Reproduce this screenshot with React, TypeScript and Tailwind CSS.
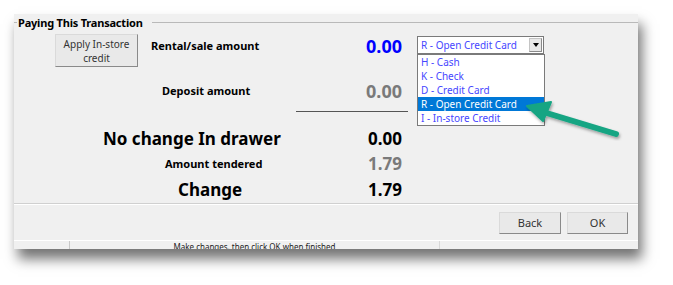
import React from "react";

const items = [
  { code: "H", label: "Cash" },
  { code: "K", label: "Check" },
  { code: "D", label: "Credit Card" },
  { code: "R", label: "Open Credit Card" },
  { code: "I", label: "In-store Credit" },
];

function WinButton({ children, className = "" }: { children: React.ReactNode; className?: string }) {
  return (
    <button
      className={`flex items-center justify-center bg-[#e9e9e9] border border-[#dadada] border-r-[#8a8a8a] border-b-[#8a8a8a] text-[#333] leading-[14px] ${className}`}
    >
      {children}
    </button>
  );
}

export default function App() {
  const selected = "R";

  return (
    <div className="relative w-[673px] h-[285px] bg-white overflow-hidden font-['Noto_Sans',sans-serif]">
      <div className="ml-[14px] pt-[14px]">
        <div className="relative w-[624px] h-[235px] bg-[#f0f0f0] flex flex-col shadow-[4px_10px_12px_rgba(0,0,0,0.55)]">
          {/* group header */}
          <div className="flex items-center h-[18px]">
            <div className="w-[3px] h-px bg-[#b9b9b9] mt-[-2px]" />
            <span className="ml-[1px] text-[11px] font-bold text-black tracking-[-0.2px]">Paying This Transaction</span>
            <div className="flex-1 h-px bg-[#b9b9b9] ml-[9px] mt-[-2px]" />
          </div>

          {/* row 1 */}
          <div className="flex items-start h-[33px] mt-[2px]">
            <WinButton className="ml-[41px] w-[83px] h-[33px] flex-col text-[10px] leading-[13px]">
              <span>Apply In-store</span>
              <span>credit</span>
            </WinButton>
            <div className="ml-[13px] h-[24px] leading-[24px] text-[11px] font-bold text-black">Rental/sale amount</div>
            <div className="ml-auto mr-[236px] h-[24px] leading-[24px] text-[18px] font-bold text-[#0000ff]">0.00</div>
          </div>

          {/* row 2 */}
          <div className="flex items-center h-[24px] mt-[12px]">
            <div className="ml-[148px] text-[11px] font-bold text-black">Deposit amount</div>
            <div className="ml-auto mr-[236px] text-[18px] font-bold text-[#7a7a7a]">0.00</div>
          </div>

          <div className="flex">
            <div className="ml-[282px] mt-[8px] w-[112px] h-px bg-[#555]" />
          </div>

          {/* row 3 */}
          <div className="flex items-center h-[24px] mt-[15px]">
            <div className="ml-[89px] text-[17px] font-bold text-black">No change In drawer</div>
            <div className="ml-auto mr-[236px] text-[17px] font-bold text-black">0.00</div>
          </div>

          {/* row 4 */}
          <div className="flex items-center h-[20px] mt-[3px]">
            <div className="ml-[151px] text-[11px] font-bold text-black">Amount tendered</div>
            <div className="ml-auto mr-[236px] text-[17px] font-bold text-[#7a7a7a]">1.79</div>
          </div>

          {/* row 5 */}
          <div className="flex items-center h-[24px] mt-[4px]">
            <div className="ml-[164px] text-[17px] font-bold text-black">Change</div>
            <div className="ml-auto mr-[236px] text-[17px] font-bold text-black">1.79</div>
          </div>

          <div className="mt-[1px] h-[2px] bg-[#d0d0d0] border-b border-white" />

          {/* buttons */}
          <div className="flex justify-end gap-[6px] pr-[10px] mt-[7px]">
            <WinButton className="w-[62px] h-[22px] text-[11px]">Back</WinButton>
            <WinButton className="w-[61px] h-[22px] text-[11px]">OK</WinButton>
          </div>

          {/* status bar */}
          <div className="mt-auto h-[9px] flex border-t border-white overflow-hidden">
            <div className="w-[56px] border-r border-[#c8c8c8]" />
            <div className="w-[370px] border-r border-[#d8d8d8] flex justify-center">
              <span className="text-[8px] leading-[10px] text-[#222] mt-[1px]">Make changes, then click OK when finished</span>
            </div>
            <div className="flex-1" />
          </div>

          {/* combo box */}
          <div className="absolute left-[403px] top-[22px] w-[127px] h-[18px] bg-white border border-[#7a7a7a] flex items-center">
            <span className="pl-[3px] text-[10px] text-[#4646ff]">R - Open Credit Card</span>
            <div className="ml-auto mr-[1px] w-[13px] h-[14px] bg-[#e8e8e8] border border-[#c4c4c4] border-r-[#8a8a8a] border-b-[#8a8a8a] flex items-center justify-center">
              <div className="w-0 h-0 border-l-[3px] border-r-[3px] border-t-[4px] border-l-transparent border-r-transparent border-t-black" />
            </div>
          </div>

          {/* open list */}
          <div className="absolute left-[403px] top-[40px] w-[128px] bg-white border border-[#7a7a7a]">
            {items.map((it) => (
              <div
                key={it.code}
                className={`h-[14px] leading-[14px] pl-[3px] text-[10px] ${
                  it.code === selected ? "bg-[#0078d7] text-white" : "text-[#4646ff]"
                }`}
              >
                {it.code} - {it.label}
              </div>
            ))}
          </div>
        </div>
      </div>

      {/* annotation arrow */}
      <svg className="absolute left-0 top-0" width="673" height="285" viewBox="0 0 673 285">
        <defs>
          <filter id="sh" x="-20%" y="-20%" width="140%" height="140%">
            <feDropShadow dx="1" dy="2" stdDeviation="1.5" floodColor="#000" floodOpacity="0.35" />
          </filter>
        </defs>
        <g filter="url(#sh)" fill="#16a583" stroke="#16a583" strokeLinecap="round" strokeLinejoin="round">
          <line x1="616" y1="134" x2="540" y2="111" strokeWidth="6" />
          <polygon points="527,106 551,102 543,121" strokeWidth="2" />
        </g>
      </svg>
    </div>
  );
}
